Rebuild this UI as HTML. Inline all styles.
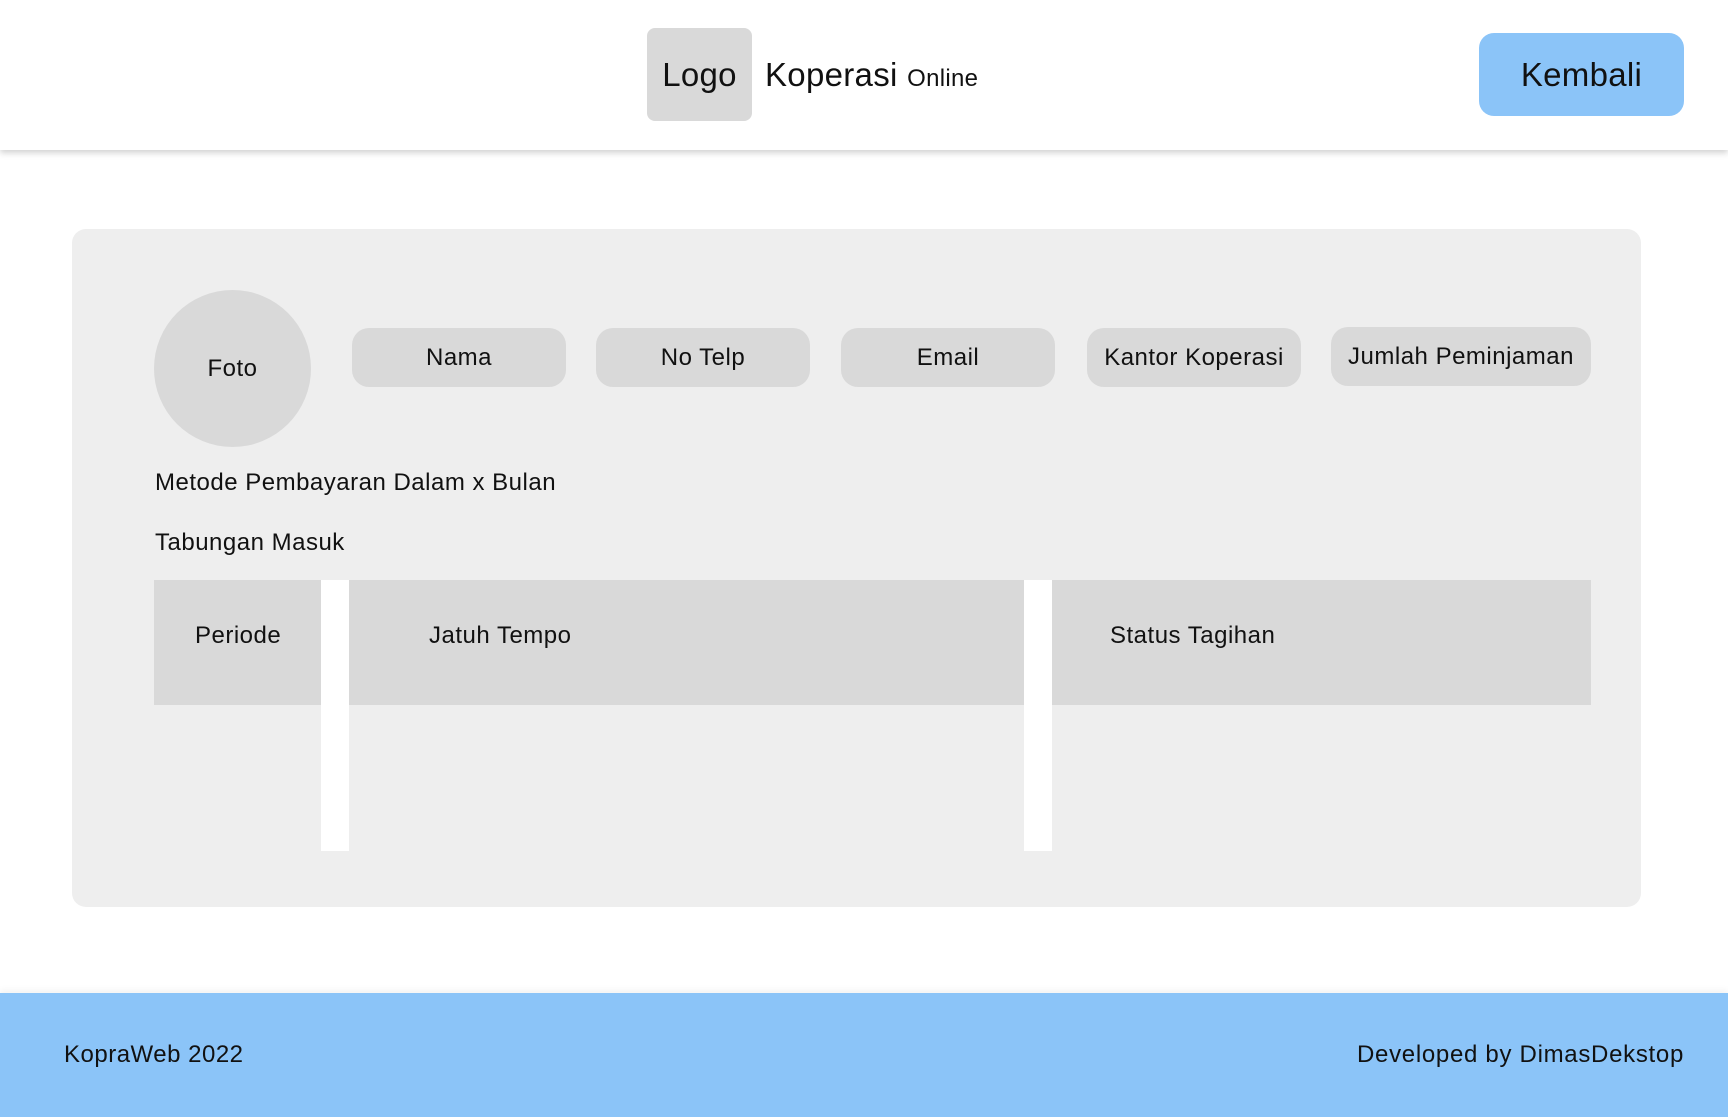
<!DOCTYPE html>
<html><head><meta charset="utf-8"><style>
*{margin:0;padding:0;box-sizing:border-box}
body{width:1728px;height:1117px;background:#fff;position:relative;overflow:hidden;font-family:"Liberation Sans",sans-serif;color:#111;letter-spacing:0.5px}
.a{position:absolute}
.hdr{left:0;top:0;width:1728px;height:150px;background:#fff;box-shadow:0 3px 6px rgba(0,0,0,.18)}
.logo{left:647px;top:28px;width:105px;height:93px;background:#d9d9d9;border-radius:8px;font-size:33px;display:flex;align-items:center;justify-content:center;letter-spacing:0.3px}
.btn{left:1479px;top:33px;width:205px;height:83px;background:#8bc4f8;border-radius:15px;font-size:33px;display:flex;align-items:center;justify-content:center;letter-spacing:0.3px}
.panel{left:72px;top:229px;width:1569px;height:678px;background:#eeeeee;border-radius:14px}
.c{display:flex;align-items:center;justify-content:center;background:#d9d9d9}
.pill{height:59px;border-radius:17px;font-size:24px;top:328px;width:214px}
.g{background:#d9d9d9}
.t{font-size:24px}
.ftr{left:0;top:993px;width:1728px;height:124px;background:#8bc4f8;box-shadow:0 -3px 6px rgba(0,0,0,.05)}
</style></head><body>
<div class="a hdr"></div>
<div class="a logo">Logo</div>
<div class="a" style="left:765px;top:56px;font-size:33px;white-space:nowrap;letter-spacing:0.3px">Koperasi <span style="font-size:24px">Online</span></div>
<div class="a btn">Kembali</div>
<div class="a panel"></div>
<div class="a c" style="left:154px;top:290px;width:157px;height:157px;border-radius:50%;font-size:24px">Foto</div>
<div class="a c pill" style="left:352px">Nama</div>
<div class="a c pill" style="left:596px;">No Telp</div>
<div class="a c pill" style="left:841px">Email</div>
<div class="a c pill" style="left:1087px">Kantor Koperasi</div>
<div class="a c pill" style="left:1331px;top:327px;width:260px">Jumlah Peminjaman</div>
<div class="a t" style="left:155px;top:469px">Metode Pembayaran Dalam x Bulan</div>
<div class="a t" style="left:155px;top:529px">Tabungan Masuk</div>
<div class="a g" style="left:154px;top:580px;width:1437px;height:125px"></div>
<div class="a" style="left:321px;top:580px;width:28px;height:271px;background:#fff"></div>
<div class="a" style="left:1024px;top:580px;width:28px;height:271px;background:#fff"></div>
<div class="a t" style="left:195px;top:622px">Periode</div>
<div class="a t" style="left:429px;top:622px">Jatuh Tempo</div>
<div class="a t" style="left:1110px;top:622px">Status Tagihan</div>
<div class="a ftr"></div>
<div class="a t" style="left:64px;top:1041px">KopraWeb 2022</div>
<div class="a t" style="right:44px;top:1041px;letter-spacing:0.7px">Developed by DimasDekstop</div>
</body></html>
